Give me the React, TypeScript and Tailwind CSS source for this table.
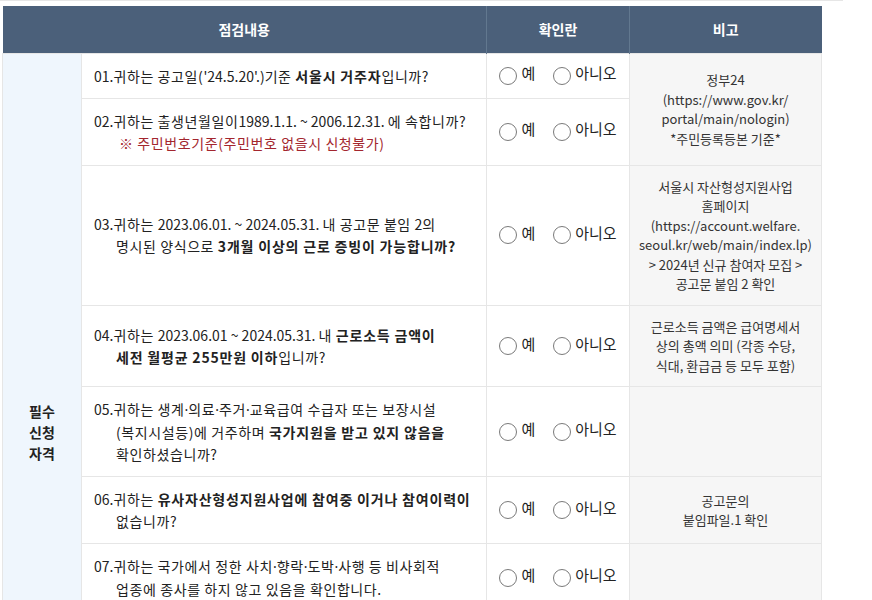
import type { ReactNode } from 'react'

const font = { fontFamily: '"Noto Sans CJK KR", "Noto Sans", sans-serif' }

// narrow middle dot (CJK font draws it full width)
const D = () => <span className="font-['Noto_Sans'] tracking-normal">·</span>

// digit runs keep their natural spacing
function N({ children }: { children: ReactNode }) {
  return <span className="tracking-normal">{children}</span>
}

function B({ children }: { children: ReactNode }) {
  return <b className="tracking-[0.8px]">{children}</b>
}

function Radio({ label }: { label: string }) {
  return (
    <span className="inline-flex items-center gap-[4px]">
      <span className="block w-[18px] h-[18px] rounded-full border border-[#7a7a7a] bg-white" />
      <span className="-mt-[4px]">{label}</span>
    </span>
  )
}

function Check() {
  return (
    <td className="border border-[#e6e6e6] text-center align-middle">
      <div className="flex items-center justify-center gap-[18px] text-[15px] text-[#222]">
        <Radio label="예" />
        <Radio label="아니오" />
      </div>
    </td>
  )
}

function Question({ children }: { children: ReactNode }) {
  return (
    <td className="border border-[#e6e6e6] pl-3 pr-2 py-[11px] align-middle">
      <div className="pl-[22px] -indent-[22px] text-[14px] leading-[22px] tracking-[0.6px] text-[#222]">
        {children}
      </div>
    </td>
  )
}

function Note({ lines, rowSpan }: { lines?: string[]; rowSpan?: number }) {
  return (
    <td
      rowSpan={rowSpan}
      className="border border-[#e6e6e6] bg-[#f6f6f6] px-2 py-[11px] text-center align-middle text-[13px] leading-[19.5px] text-[#333]"
    >
      {lines?.map((l) => (
        <div key={l}>{l}</div>
      ))}
    </td>
  )
}

export default function App() {
  return (
    <div className="min-h-screen bg-white" style={font}>
      <div className="w-[843px] border-t border-[#e6e6e6] pt-[5px] pl-[2px]">
        <table className="w-[819px] table-fixed border-collapse">
          <colgroup>
            <col className="w-[79px]" />
            <col className="w-[405px]" />
            <col className="w-[143px]" />
            <col className="w-[192px]" />
          </colgroup>
          <thead>
            <tr className="h-[47px] bg-[#4b607a] text-white text-[14px] font-bold">
              <th colSpan={2} className="border-r border-[#62788f]">점검내용</th>
              <th className="border-r border-[#62788f]">확인란</th>
              <th>비고</th>
            </tr>
          </thead>
          <tbody>
            <tr>
              <td
                rowSpan={8}
                className="border border-[#e6e6e6] bg-[#eff6fd] text-center align-middle text-[14px] leading-[21px] font-bold text-[#222]"
              >
                필수
                <br />
                신청
                <br />
                자격
              </td>
              <Question>
                <N>01.</N>귀하는 공고일(<N>'24.5.20'.)</N>기준 <B>서울시 거주자</B>입니까?
              </Question>
              <Check />
              <Note
                rowSpan={2}
                lines={['정부24', '(https://www.gov.kr/', 'portal/main/nologin)', '*주민등록등본 기준*']}
              />
            </tr>
            <tr>
              <Question>
                <N>02.</N>귀하는 출생년월일이<N>1989.1.1. ~ 2006.12.31. </N>에 속합니까?
                <br />
                <span className="pl-[3px] text-[#a3262e]">※ 주민번호기준(주민번호 없을시 신청불가)</span>
              </Question>
              <Check />
            </tr>
            <tr>
              <Question>
                <N>03.</N>귀하는 <N>2023.06.01. ~ 2024.05.31. </N>내 공고문 붙임 <N>2</N>의
                <br />
                명시된 양식으로 <B>3개월 이상의 근로 증빙이 가능합니까?</B>
              </Question>
              <Check />
              <Note
                lines={[
                  '서울시 자산형성지원사업',
                  '홈페이지',
                  '(https://account.welfare.',
                  'seoul.kr/web/main/index.lp)',
                  '> 2024년 신규 참여자 모집 >',
                  '공고문 붙임 2 확인',
                ]}
              />
            </tr>
            <tr>
              <Question>
                <N>04.</N>귀하는 <N>2023.06.01 ~ 2024.05.31. </N>내 <B>근로소득 금액이</B>
                <br />
                <B>세전 월평균 255만원 이하</B>입니까?
              </Question>
              <Check />
              <Note lines={['근로소득 금액은 급여명세서', '상의 총액 의미 (각종 수당,', '식대, 환급금 등 모두 포함)']} />
            </tr>
            <tr>
              <Question>
                <N>05.</N>귀하는 생계<D />의료<D />주거<D />교육급여 수급자 또는 보장시설
                <br />
                (복지시설등)에 거주하며 <B>국가지원을 받고 있지 않음을</B>
                <br />
                확인하셨습니까?
              </Question>
              <Check />
              <Note />
            </tr>
            <tr>
              <Question>
                <N>06.</N>귀하는 <B>유사자산형성지원사업에 참여중 이거나 참여이력이</B>
                <br />
                없습니까?
              </Question>
              <Check />
              <Note lines={['공고문의', '붙임파일.1 확인']} />
            </tr>
            <tr>
              <Question>
                <N>07.</N>귀하는 국가에서 정한 사치<D />향락<D />도박<D />사행 등 비사회적
                <br />
                업종에 종사를 하지 않고 있음을 확인합니다.
              </Question>
              <Check />
              <Note />
            </tr>
            <tr className="h-[200px]">
              <td className="border border-[#e6e6e6]" />
              <td className="border border-[#e6e6e6]" />
              <td className="border border-[#e6e6e6] bg-[#f6f6f6]" />
            </tr>
          </tbody>
        </table>
      </div>
    </div>
  )
}
